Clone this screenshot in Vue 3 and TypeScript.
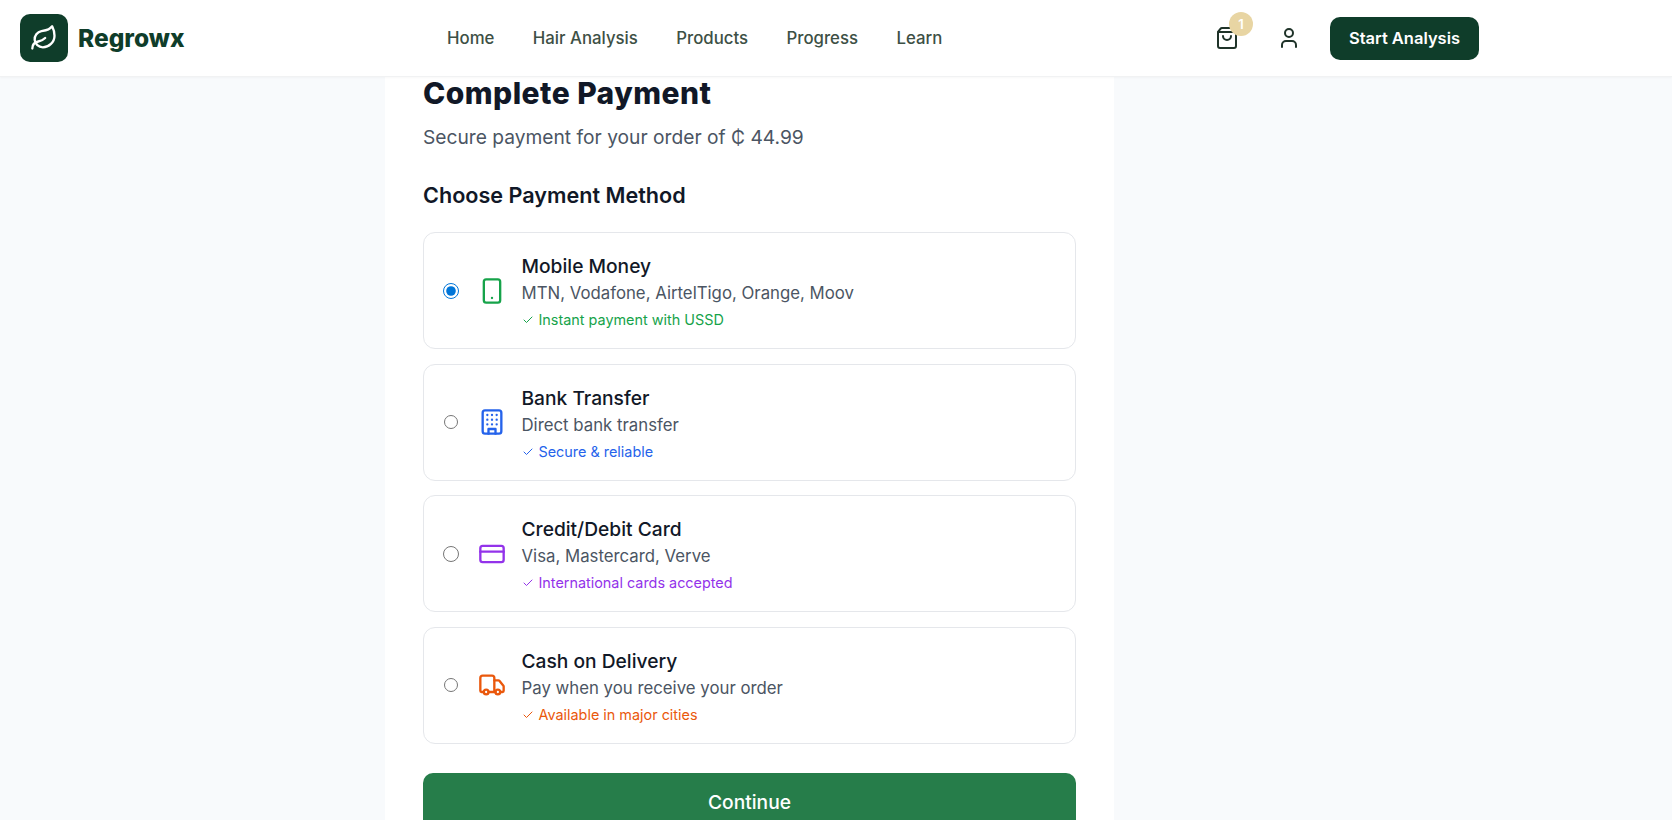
<script setup lang="ts">
import { ref } from 'vue';

interface Method {
    id: string;
    name: string;
    desc: string;
    note: string;
    tone: string;
    compact: boolean;
}

const navLinks = ['Home', 'Hair Analysis', 'Products', 'Progress', 'Learn'];

const methods: Method[] = [
    { id: 'momo', name: 'Mobile Money', desc: 'MTN, Vodafone, AirtelTigo, Orange, Moov', note: 'Instant payment with USSD', tone: 'green', compact: false },
    { id: 'bank', name: 'Bank Transfer', desc: 'Direct bank transfer', note: 'Secure & reliable', tone: 'blue', compact: true },
    { id: 'card', name: 'Credit/Debit Card', desc: 'Visa, Mastercard, Verve', note: 'International cards accepted', tone: 'purple', compact: false },
    { id: 'cash', name: 'Cash on Delivery', desc: 'Pay when you receive your order', note: 'Available in major cities', tone: 'orange', compact: true },
];

const selected = ref('momo');
</script>

<template>
    <div class="page">
        <header class="topbar">
            <div class="topbar-inner">
                <a class="brand">
                    <span class="brand-mark">
                        <svg width="28" height="28" viewBox="0 0 24 24" fill="none" stroke="currentColor" stroke-width="2" stroke-linecap="round" stroke-linejoin="round">
                            <path d="M11 20A7 7 0 0 1 9.8 6.1C15.5 5 17 4.48 19 2c1 2 2 4.18 2 8 0 5.5-4.78 10-10 10Z" />
                            <path d="M2 21c0-3 1.85-5.36 5.08-6C9.5 14.52 12 13 13 12" />
                        </svg>
                    </span>
                    <span class="brand-name">Regrowx</span>
                </a>
                <nav class="nav">
                    <a v-for="link in navLinks" :key="link">{{ link }}</a>
                </nav>
                <div class="actions">
                    <button class="icon-btn" aria-label="Cart">
                        <svg width="24" height="24" viewBox="0 0 24 24" fill="none" stroke="currentColor" stroke-width="2" stroke-linecap="round" stroke-linejoin="round">
                            <path d="M16 10a4 4 0 0 1-8 0" />
                            <path d="M3.103 6.034h17.794" />
                            <path d="M3.4 5.467a2 2 0 0 0-.4 1.2V20a2 2 0 0 0 2 2h14a2 2 0 0 0 2-2V6.667a2 2 0 0 0-.4-1.2l-2.1-2.8A2 2 0 0 0 17 2H7a2 2 0 0 0-1.6.8z" />
                        </svg>
                        <span class="badge">1</span>
                    </button>
                    <button class="icon-btn" aria-label="Account">
                        <svg width="24" height="24" viewBox="0 0 24 24" fill="none" stroke="currentColor" stroke-width="2" stroke-linecap="round" stroke-linejoin="round">
                            <path d="M19 21v-2a4 4 0 0 0-4-4H9a4 4 0 0 0-4 4v2" />
                            <circle cx="12" cy="7" r="4" />
                        </svg>
                    </button>
                    <button class="start-btn">Start Analysis</button>
                </div>
            </div>
        </header>

        <main class="main">
            <section class="panel">
                <h1>Complete Payment</h1>
                <p class="lead">Secure payment for your order of ₵ 44.99</p>
                <h2>Choose Payment Method</h2>

                <div class="methods">
                    <label v-for="m in methods" :key="m.id" class="method">
                        <input v-model="selected" type="radio" name="method" :value="m.id" :class="{ compact: m.compact }" />
                        <span class="method-icon" :class="m.tone">
                            <svg width="28" height="28" viewBox="0 0 24 24" fill="none" stroke="currentColor" stroke-width="2" stroke-linecap="round" stroke-linejoin="round">
                                <template v-if="m.id === 'momo'">
                                    <rect x="5" y="2" width="14" height="20" rx="2" ry="2" />
                                    <path d="M12 18h.01" />
                                </template>
                                <template v-else-if="m.id === 'bank'">
                                    <rect x="4" y="2" width="16" height="20" rx="2" ry="2" />
                                    <path d="M9 22v-4h6v4" />
                                    <path d="M8 6h.01M16 6h.01M12 6h.01M12 10h.01M12 14h.01M16 10h.01M16 14h.01M8 10h.01M8 14h.01" />
                                </template>
                                <template v-else-if="m.id === 'card'">
                                    <rect x="2" y="5" width="20" height="14" rx="2" />
                                    <path d="M2 10h20" />
                                </template>
                                <template v-else>
                                    <path d="M14 18V6a2 2 0 0 0-2-2H4a2 2 0 0 0-2 2v11a1 1 0 0 0 1 1h2" />
                                    <path d="M15 18H9" />
                                    <path d="M19 18h2a1 1 0 0 0 1-1v-3.65a1 1 0 0 0-.22-.624l-3.48-4.35A1 1 0 0 0 17.52 8H14" />
                                    <circle cx="17" cy="18" r="2" />
                                    <circle cx="7" cy="18" r="2" />
                                </template>
                            </svg>
                        </span>
                        <span class="method-text">
                            <span class="method-name">{{ m.name }}</span>
                            <span class="method-desc">{{ m.desc }}</span>
                            <span class="method-note" :class="m.tone">
                                <svg width="12" height="12" viewBox="0 0 24 24" fill="none" stroke="currentColor" stroke-width="2" stroke-linecap="round" stroke-linejoin="round">
                                    <path d="M20 6 9 17l-5-5" />
                                </svg>
                                {{ m.note }}
                            </span>
                        </span>
                    </label>
                </div>

                <button class="continue">Continue</button>
            </section>
        </main>
    </div>
</template>

<style>
html,
body {
    margin: 0;
    height: 100%;
    overflow: hidden;
}
</style>

<style scoped>
.page {
    height: 820px;
    overflow: hidden;
    background-color: #f8fafc;
    font-family: Inter, "Noto Sans", sans-serif;
    color: #111827;
}

.topbar {
    height: 76px;
    background-color: #fff;
    border-bottom: 1px solid #f1f2f3;
    box-shadow: 0 1px 2px rgba(0, 0, 0, 0.03);
    position: relative;
    z-index: 2;
}

.topbar-inner {
    width: 1500px;
    height: 100%;
    box-sizing: border-box;
    padding: 0 21px 0 20px;
    display: flex;
    align-items: center;
}

.brand {
    display: flex;
    align-items: center;
    gap: 10px;
    width: 427px;
}

.brand-mark {
    width: 48px;
    height: 48px;
    border-radius: 10px;
    background-color: #0f3d2a;
    color: #fff;
    display: flex;
    align-items: center;
    justify-content: center;
}

.brand-name {
    font-size: 24.5px;
    font-weight: 800;
    color: #0f3d2a;
}

.nav {
    display: flex;
    gap: 38.4px;
    font-size: 16.8px;
    font-weight: 500;
    color: #3d5045;
}

.actions {
    margin-left: auto;
    display: flex;
    align-items: center;
    gap: 22px;
}

.icon-btn {
    position: relative;
    width: 40px;
    height: 40px;
    padding: 8px;
    box-sizing: border-box;
    border: none;
    background: none;
    color: #1f3329;
    display: flex;
}

.badge {
    position: absolute;
    top: -6px;
    right: -6px;
    width: 24px;
    height: 24px;
    border-radius: 50%;
    background-color: #e8d5a3;
    color: #fff;
    font-family: Inter, sans-serif;
    font-size: 13px;
    font-weight: 600;
    display: flex;
    align-items: center;
    justify-content: center;
}

.start-btn {
    margin-left: -1px;
    width: 149px;
    height: 43px;
    border: none;
    border-radius: 10px;
    background-color: #0f3d2a;
    color: #fff;
    font-family: Inter, sans-serif;
    font-size: 16.5px;
    font-weight: 600;
}

.main {
    width: 1499px;
    display: flex;
    justify-content: center;
}

.panel {
    width: 729px;
    height: 743px;
    box-sizing: border-box;
    padding: 0 38px;
    background-color: #fff;
}

h1 {
    margin: 0;
    font-size: 30px;
    line-height: 32px;
    font-weight: 800;
    letter-spacing: 0.45px;
    color: #111827;
}

.lead {
    margin: 14px 0 0;
    font-size: 19.2px;
    line-height: 28px;
    color: #4b5563;
}

h2 {
    margin: 30px 0 0;
    font-size: 21.6px;
    line-height: 28px;
    font-weight: 600;
    color: #111827;
}

.methods {
    margin-top: 23px;
    display: flex;
    flex-direction: column;
    gap: 14.67px;
}

.method {
    height: 117px;
    box-sizing: border-box;
    padding: 0 19px;
    border: 1px solid #e5e7eb;
    border-radius: 12px;
    display: flex;
    align-items: center;
    background-color: #fff;
}

.method input {
    width: 16px;
    height: 16px;
    margin: 0;
    flex: none;
    accent-color: #0075d8;
}

.method input.compact {
    width: 14px;
    height: 14px;
    margin: 0 1px;
}

.method-icon {
    width: 28px;
    height: 28px;
    margin: 0 15.5px 0 19px;
    flex: none;
    display: flex;
}

.method-text {
    padding-top: 1px;
    display: flex;
    flex-direction: column;
}

.method-name {
    font-size: 19.2px;
    line-height: 29px;
    font-weight: 500;
    color: #111827;
}

.method-desc {
    font-size: 16.8px;
    line-height: 24px;
    color: #4b5563;
}

.method-note {
    margin-top: 5px;
    font-size: 14.4px;
    line-height: 20px;
    display: flex;
    align-items: center;
    gap: 5px;
}

.green {
    color: #16a34a;
}

.blue {
    color: #2563eb;
}

.purple {
    color: #9333ea;
}

.orange {
    color: #ea580c;
}

.continue {
    margin-top: 29px;
    width: 100%;
    height: 58px;
    border: none;
    border-radius: 10px;
    background-color: #267d4a;
    color: #fff;
    font-family: Inter, sans-serif;
    font-size: 19.2px;
    font-weight: 500;
}
</style>
